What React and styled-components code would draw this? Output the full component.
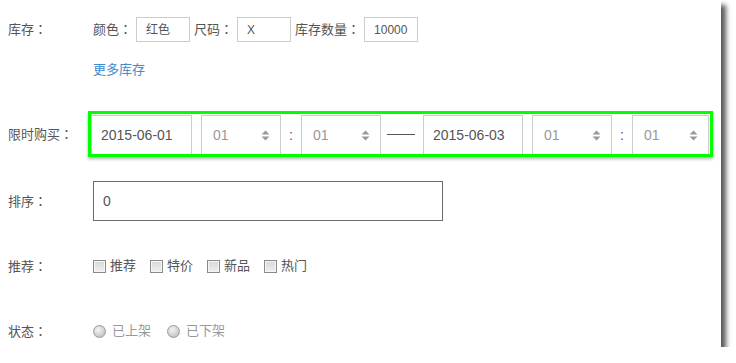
import styled, { createGlobalStyle } from "styled-components";

const GlobalStyle = createGlobalStyle`
  html, body { margin: 0; padding: 0; background: #fff; }
  body { font-family: "Liberation Sans", "Noto Sans CJK SC", sans-serif; }
`;

const Panel = styled.div`
  width: 721px;
  height: 347px;
  box-sizing: border-box;
  padding: 17px 0 0 8px;
  background: #fff;
  box-shadow: 5px 5px 5px rgba(0, 0, 0, 0.65);
  display: flex;
  flex-direction: column;
`;

const Row = styled.div`
  display: flex;
  align-items: center;
  margin-top: ${(p) => p.$top || 0}px;
  height: ${(p) => p.$h || 16}px;
`;

const Label = styled.div`
  width: 85px;
  flex: none;
  font-size: 13px;
  line-height: 16px;
  color: #555;
`;

// full-width colon centred in its cell, as in the original font
const Punct = styled.span`
  font-family: "Noto Sans CJK TC", sans-serif;
`;

const Field = styled.div`
  display: flex;
  align-items: center;
  gap: ${(p) => p.$gap ?? 4}px;
  font-size: 13px;
  line-height: 16px;
  color: #555;
`;

const SmallInput = styled.div`
  width: 54px;
  height: 25px;
  box-sizing: border-box;
  border: 1px solid #ccc;
  padding-left: 9px;
  display: flex;
  align-items: center;
  font-size: 12px;
  color: #555;
`;

const Link = styled.a`
  margin-left: 85px;
  font-size: 13px;
  line-height: 16px;
  color: #3d8bd0;
  text-decoration: none;
`;

const Highlight = styled.div`
  margin-left: -5px;
  width: 625px;
  height: 46px;
  box-sizing: border-box;
  border: 3px solid #00ff00;
  padding-top: 1px;
  display: flex;
  overflow: hidden;
  box-shadow: 0 2px 3px rgba(0, 0, 0, 0.3);
`;

const DateBox = styled.div`
  flex: none;
  width: ${(p) => p.$w}px;
  height: 40px;
  box-sizing: border-box;
  border: 1px solid #ccc;
  padding-left: 9px;
  display: flex;
  align-items: center;
  font-size: 14px;
  color: #555;
`;

const SelectBox = styled.div`
  flex: none;
  width: ${(p) => p.$w || 80}px;
  height: 40px;
  box-sizing: border-box;
  border: 1px solid #ccc;
  padding: 0 10px 0 11px;
  display: flex;
  align-items: center;
  justify-content: space-between;
  font-size: 14px;
  color: #999;
`;

const Gap = styled.div`
  flex: none;
  width: 9px;
`;

const Colon = styled.div`
  flex: none;
  width: 20px;
  display: flex;
  align-items: center;
  justify-content: center;
  font-size: 14px;
  color: #555;
`;

const Dash = styled.div`
  flex: none;
  width: 42px;
  display: flex;
  align-items: center;
  justify-content: center;
  padding-right: 2px;
  box-sizing: border-box;

  &::before {
    content: "";
    width: 28px;
    height: 1px;
    background: #555;
  }
`;

const SortInput = styled.div`
  width: 350px;
  height: 40px;
  box-sizing: border-box;
  border: 1px solid #6b6b6b;
  padding-left: 9px;
  display: flex;
  align-items: center;
  font-size: 14px;
  color: #555;
`;

const Option = styled.label`
  display: flex;
  align-items: center;
  gap: ${(p) => p.$gap || 4}px;
  color: ${(p) => (p.$muted ? "#999" : "#555")};
`;

const Check = styled.span`
  width: 13px;
  height: 13px;
  box-sizing: border-box;
  border: 1px solid #8a8a8a;
  background: linear-gradient(#d8d8d8, #efefef);
  box-shadow: inset 0 0 0 1px #f6f6f6;
`;

const Radio = styled.span`
  width: 13px;
  height: 13px;
  box-sizing: border-box;
  border-radius: 50%;
  border: 1px solid #999;
  background: radial-gradient(circle at 40% 35%, #f4f4f4, #b5b5b5);
`;

const Spinner = () => (
  <svg width="9" height="11" viewBox="0 0 9 11">
    <path d="M4.5 0.5 L8.5 4.6 H0.5 Z" fill="#999" />
    <path d="M4.5 10.5 L8.5 6.4 H0.5 Z" fill="#999" />
  </svg>
);

function Select({ value, w }) {
  return (
    <SelectBox $w={w}>
      {value}
      <Spinner />
    </SelectBox>
  );
}

export default function App() {
  return (
    <>
      <GlobalStyle />
      <Panel>
        <Row $h={25}>
          <Label>库存<Punct>：</Punct></Label>
          <Field>
            <span>颜色<Punct>：</Punct></span>
            <SmallInput>红色</SmallInput>
            <span>尺码<Punct>：</Punct></span>
            <SmallInput>X</SmallInput>
            <span>库存数量<Punct>：</Punct></span>
            <SmallInput>10000</SmallInput>
          </Field>
        </Row>

        <Row $top={20}>
          <Link href="#">更多库存</Link>
        </Row>

        <Row $top={33} $h={46}>
          <Label>限时购买<Punct>：</Punct></Label>
          <Highlight>
            <DateBox $w={101}>2015-06-01</DateBox>
            <Gap />
            <Select value="01" />
            <Colon>:</Colon>
            <Select value="01" />
            <Dash />
            <DateBox $w={100}>2015-06-03</DateBox>
            <Gap />
            <Select value="01" />
            <Colon>:</Colon>
            <Select value="01" w={77} />
          </Highlight>
        </Row>

        <Row $top={24} $h={40}>
          <Label>排序<Punct>：</Punct></Label>
          <SortInput>0</SortInput>
        </Row>

        <Row $top={37}>
          <Label>推荐<Punct>：</Punct></Label>
          <Field $gap={14}>
            <Option><Check />推荐</Option>
            <Option><Check />特价</Option>
            <Option><Check />新品</Option>
            <Option><Check />热门</Option>
          </Field>
        </Row>

        <Row $top={49}>
          <Label>状态<Punct>：</Punct></Label>
          <Field $gap={16}>
            <Option $gap={6} $muted><Radio />已上架</Option>
            <Option $gap={6} $muted><Radio />已下架</Option>
          </Field>
        </Row>
      </Panel>
    </>
  );
}
